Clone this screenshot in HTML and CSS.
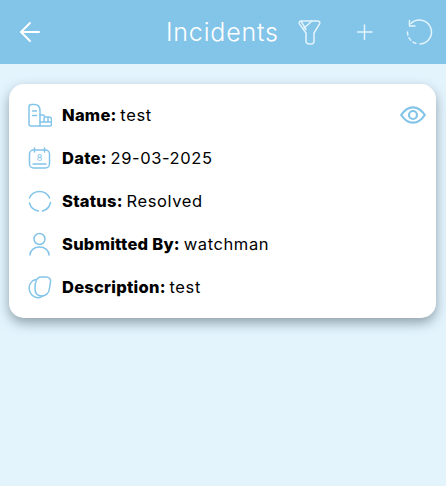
FILE: index.html
```html
<!DOCTYPE html>
<html lang="en">
<head>
<meta charset="utf-8">
<title>Incidents</title>
<link rel="stylesheet" href="styles.css">
</head>
<body>
<header class="bar">
  <svg class="back" width="24" height="24" viewBox="0 0 24 24"><path d="M21 12H3M12 3l-9 9 9 9"/></svg>
  <h1 class="title">Incidents</h1>
  <svg class="tool filter" width="26" height="28" viewBox="0 0 26 28"><path d="M4.500 3h16c1.800 0 2.700 1.200 2.200 2.600L17 15v8c0 2-1.200 3-2.800 3h-1.500C10.200 26 9 25 9 23v-8L2.300 5.600C1.800 4.200 2.700 3 4.500 3z"/><path d="M15 3L6.500 10.500M4 3.200l5 8.300"/></svg>
  <svg class="tool plus" width="18" height="18" viewBox="0 0 18 18"><path d="M9.500 2v14.500M2.500 9h14.500"/></svg>
  <svg class="tool undo" width="28" height="28" viewBox="0 0 28 28"><path d="M5 5.500A12 12 0 1 1 14 26"/><path d="M3.500 2.500V8H9"/><path class="dash" d="M1.500 14a12 12 0 0 0 9.500 11.700"/></svg>
</header>
<main class="card">
  <svg class="eye" width="26" height="18" viewBox="0 0 26 18"><path d="M1.200 9C4.500 4 8.500 1.300 13 1.300S21.500 4 24.800 9c-3.300 5-7.300 7.700-11.800 7.700S4.500 14 1.200 9z"/><circle cx="13" cy="9" r="4"/></svg>
  <div class="row">
    <svg class="icon" width="24" height="24" viewBox="0 0 24 24"><path d="M1 21V4c0-1.500 1-2.500 2.500-2.500h3C10 1.500 12 4 12 8v15H3c-1.200 0-2-.8-2-2z"/><path d="M4.500 8h4M4.500 12.500h4M12 12h3.500l1.500 2h4c1.500 0 2.500 1 2.500 2.500V21c0 1.200-.8 2-2 2H12M12 19h11.500M16 15v4M20 15v4"/></svg>
    <p class="text"><b>Name:</b> test</p>
  </div>
  <div class="row">
    <svg class="icon" width="24" height="24" viewBox="0 0 24 24"><rect x="1.500" y="4" width="20" height="18" rx="4"/><path d="M6.500 2v4M16.500 2v4M5 18h13"/><text class="glyph" x="11.500" y="15">8</text></svg>
    <p class="text"><b>Date:</b> 29-03-2025</p>
  </div>
  <div class="row">
    <svg class="icon" width="24" height="24" viewBox="0 0 24 24"><path d="M1.500 9A11 11 0 0 1 21.500 9M22.500 13.500a11 11 0 0 1-8 8.500M10.500 22a11 11 0 0 1-9-8"/></svg>
    <p class="text"><b>Status:</b> Resolved</p>
  </div>
  <div class="row">
    <svg class="icon" width="24" height="24" viewBox="0 0 24 24"><circle cx="11.500" cy="7" r="5.500"/><path d="M2 23c0-4.500 4-8 9.500-8s9.500 3.500 9.500 8"/></svg>
    <p class="text"><b>Submitted By:</b> watchman</p>
  </div>
  <div class="row">
    <svg class="icon" width="24" height="24" viewBox="0 0 24 24"><path d="M12 2h6c3.500 0 5 2 4.500 5l-1.300 8c-.5 3-3.500 6-7.200 6-4.500 0-7.500-3-7-7.500C7 8 8 3 12 2z"/><path d="M7.500 4.500C3 6 .8 10 1.200 14c.4 4.500 3.800 8 7.300 8.500 2 .3 4.500 0 6-1.500"/></svg>
    <p class="text"><b>Description:</b> test</p>
  </div>
</main>
</body>
</html>
```
FILE: styles.css
```css
* { box-sizing: border-box; }
html, body { height: 100%; }
body {
  margin: 0;
  background: #e3f4fd;
  font-family: "Inter", "Open Sans", sans-serif;
  color: #000;
  overflow: hidden;
}
.bar {
  height: 64px;
  background: #83c4e9;
  display: flex;
  align-items: center;
  padding: 0 14px 0 18px;
}
.bar svg { fill: none; stroke-linecap: round; stroke-linejoin: round; flex: none; }
.back { stroke: #fff; stroke-width: 2; }
.title {
  margin: 0 0 0 124px;
  font-size: 25px;
  font-weight: 300;
  letter-spacing: .8px;
  color: #fff;
  width: 113px;
  white-space: nowrap;
}
.tool { stroke: #e3f4fd; stroke-width: 1.500; }
.filter { margin-left: 18px; }
.plus { margin-left: 32px; }
.undo { margin-left: 33px; }
.undo .dash { stroke-dasharray: 3 3; }
.card {
  position: relative;
  margin: 20px 10px 0 9px;
  height: 234px;
  padding: 9px 0 0 19px;
  background: #fff;
  border-radius: 15px;
  box-shadow: 0 5px 12px rgba(60, 80, 90, .5);
}
.row {
  height: 43px;
  display: flex;
  align-items: center;
  gap: 10px;
}
.icon { fill: none; stroke: #83c4e9; stroke-width: 1.500; stroke-linecap: round; stroke-linejoin: round; flex: none; }
.glyph { fill: #83c4e9; stroke: none; font-size: 9px; text-anchor: middle; }
.text { margin: 0; font-size: 16.500px; white-space: nowrap; letter-spacing: .6px; word-spacing: -1.500px; }
.text b { font-weight: 800; letter-spacing: .25px; word-spacing: 0; }
.eye {
  position: absolute;
  top: 22px;
  right: 10px;
  fill: none;
  stroke: #83c4e9;
  stroke-width: 2.200;
}
```
